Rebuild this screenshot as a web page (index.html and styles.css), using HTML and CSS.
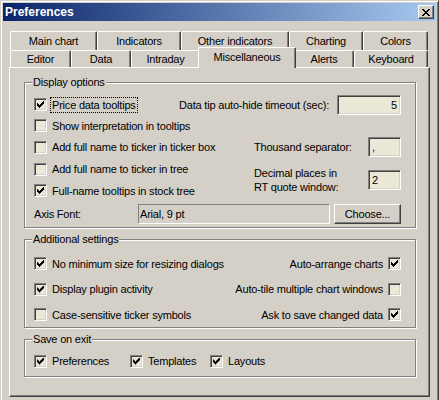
FILE: index.html
```html
<!DOCTYPE html>
<html lang="en">
<head>
    <meta charset="UTF-8">
    <meta name="viewport" content="width=device-width, initial-scale=1.0">
    <title>Preferences</title>
    <link rel="stylesheet" href="styles.css">
</head>
<body>
    <div class="window">
        <!-- Caption bar -->
        <div class="titlebar">
            <span class="title">Preferences</span>
            <button class="close-btn" type="button">
                <svg width="8" height="7" viewBox="0 0 8 7" shape-rendering="crispEdges">
                    <path d="M0 0h2v1H0zM6 0h2v1H6zM1 1h2v1H1zM5 1h2v1H5zM2 2h4v1H2zM3 3h2v1H3zM2 4h4v1H2zM1 5h2v1H1zM5 5h2v1H5zM0 6h2v1H0zM6 6h2v1H6z" fill="#000"/>
                </svg>
            </button>
        </div>

        <!-- Tab strip, two rows -->
        <div class="tabs">
            <div class="tab-row back">
                <div class="tab">Main chart</div>
                <div class="tab">Indicators</div>
                <div class="tab">Other indicators</div>
                <div class="tab">Charting</div>
                <div class="tab">Colors</div>
            </div>
            <div class="tab-row front">
                <div class="tab">Editor</div>
                <div class="tab">Data</div>
                <div class="tab">Intraday</div>
                <div class="tab active">Miscellaneous</div>
                <div class="tab">Alerts</div>
                <div class="tab">Keyboard</div>
            </div>
        </div>

        <div class="panel">
            <!-- Display options -->
            <div class="group display">
                <span class="group-title">Display options</span>
                <div class="display-grid">
                    <label class="check r1"><span class="box on"></span><span class="focus">Price data tooltips</span></label>
                    <label class="check r2"><span class="box"></span>Show interpretation in tooltips</label>
                    <label class="check r3"><span class="box"></span>Add full name to ticker in ticker box</label>
                    <label class="check r4"><span class="box"></span>Add full name to ticker in tree</label>
                    <label class="check r5"><span class="box on"></span>Full-name tooltips in stock tree</label>

                    <div class="field-row r1">
                        <span class="tip-label">Data tip auto-hide timeout (sec):</span>
                        <input class="input wide" type="text" value="5">
                    </div>
                    <div class="field-row r3">
                        <span class="side-label">Thousand separator:</span>
                        <input class="input narrow" type="text" value=",">
                    </div>
                    <div class="field-row r4-5">
                        <span class="side-label">Decimal places in<br>RT quote window:</span>
                        <input class="input narrow" type="text" value="2">
                    </div>

                    <div class="axis-row r6">
                        <span class="axis-label">Axis Font:</span>
                        <span class="font-field">Arial, 9 pt</span>
                        <button class="btn" type="button">Choose...</button>
                    </div>
                </div>
            </div>

            <!-- Additional settings -->
            <div class="group additional">
                <span class="group-title">Additional settings</span>
                <div class="opt-row">
                    <label class="check"><span class="box on"></span>No minimum size for resizing dialogs</label>
                    <label class="check">Auto-arrange charts<span class="box on"></span></label>
                </div>
                <div class="opt-row mid">
                    <label class="check"><span class="box on"></span>Display plugin activity</label>
                    <label class="check">Auto-tile multiple chart windows<span class="box"></span></label>
                </div>
                <div class="opt-row">
                    <label class="check"><span class="box"></span>Case-sensitive ticker symbols</label>
                    <label class="check">Ask to save changed data<span class="box on"></span></label>
                </div>
            </div>

            <!-- Save on exit -->
            <div class="group save">
                <span class="group-title">Save on exit</span>
                <div class="save-row">
                    <label class="check"><span class="box on"></span>Preferences</label>
                    <label class="check"><span class="box on"></span>Templates</label>
                    <label class="check"><span class="box on"></span>Layouts</label>
                </div>
            </div>
        </div>
    </div>
</body>
</html>
```

FILE: styles.css
```css
body {
    margin: 0;
    padding: 0;
    background-color: #d4d0c8;
    font-family: "Liberation Sans", Arial, sans-serif;
    font-size: 11px;
    letter-spacing: -0.2px;
    color: #000;
    overflow: hidden;
}
.window {
    width: 439px;
    height: 414px;
    box-sizing: border-box;
    padding: 2px;
    border-top: 1px solid #d4d0c8;
    border-left: 1px solid #d4d0c8;
    border-right: 1px solid #404040;
    border-bottom: 1px solid #404040;
    box-shadow: inset 1px 1px #fff, inset -1px -1px #808080;
}
.titlebar {
    height: 18px;
    display: flex;
    align-items: center;
    justify-content: space-between;
    padding: 0 2px;
    background: linear-gradient(to right, #0a246a, #a6caf0);
}
.title {
    color: #fff;
    font-weight: bold;
    font-size: 12px;
    letter-spacing: 0;
}
.close-btn {
    width: 16px;
    height: 14px;
    box-sizing: border-box;
    padding: 0;
    display: flex;
    align-items: center;
    justify-content: center;
    background-color: #d4d0c8;
    border-top: 1px solid #fff;
    border-left: 1px solid #fff;
    border-right: 1px solid #404040;
    border-bottom: 1px solid #404040;
    box-shadow: inset -1px -1px #808080;
}

/* tabs */
.tabs {
    margin: 10px 8px 0 7px;
}
.tab-row {
    display: grid;
}
.tab-row.back {
    grid-template-columns: 87px 84px 108px 74px 65px;
}
.tab-row.front {
    grid-template-columns: 61px 60px 69px 94px 60px 74px;
}
.tab {
    box-sizing: border-box;
    text-align: center;
    white-space: nowrap;
    background-color: #d4d0c8;
    border-top: 1px solid #fff;
    border-left: 1px solid #fff;
    border-right: 1px solid #404040;
    box-shadow: inset -1px 0 #808080;
    border-radius: 2px 2px 0 0;
}
.back .tab {
    height: 19px;
    line-height: 18px;
}
.front .tab {
    height: 17px;
    line-height: 16px;
}
.front .tab.active {
    position: relative;
    z-index: 1;
    height: 21px;
    line-height: 19px;
    margin: -3px -2px -1px;
}

/* tab page */
.panel {
    height: 330px;
    box-sizing: border-box;
    margin: 0 6px;
    padding: 14px 13px 0 14px;
    border-top: 1px solid #fff;
    border-left: 1px solid #fff;
    border-right: 1px solid #404040;
    border-bottom: 1px solid #404040;
    box-shadow: inset -1px -1px #808080;
}
.group {
    position: relative;
    border: 1px solid #808080;
    box-shadow: inset 1px 1px #fff, 1px 1px #fff;
}
.group-title {
    position: absolute;
    top: -7px;
    left: 7px;
    padding: 0 1px;
    line-height: 13px;
    background-color: #d4d0c8;
}
.display {
    padding: 11px 14px 0 9px;
}
.additional {
    margin-top: 11px;
    padding: 11px 14px 0 9px;
}
.save {
    margin-top: 11px;
    padding: 12px 14px 6px 9px;
}

/* checkboxes */
.check {
    display: flex;
    align-items: center;
    gap: 5px;
    white-space: nowrap;
}
.box {
    position: relative;
    flex: none;
    width: 13px;
    height: 13px;
    box-sizing: border-box;
    background-color: #ebe8d8;
    border-top: 1px solid #808080;
    border-left: 1px solid #808080;
    border-right: 1px solid #fff;
    border-bottom: 1px solid #fff;
    box-shadow: inset 1px 1px #404040, inset -1px -1px #d4d0c8;
}
.box.on::after {
    content: "";
    position: absolute;
    left: 2px;
    top: 2px;
    width: 7px;
    height: 7px;
    background-color: #000;
    clip-path: polygon(0 2px, 1px 2px, 1px 3px, 2px 3px, 2px 4px, 3px 4px, 3px 3px, 4px 3px, 4px 2px, 5px 2px, 5px 1px, 6px 1px, 6px 0, 7px 0, 7px 3px, 6px 3px, 6px 4px, 5px 4px, 5px 5px, 4px 5px, 4px 6px, 3px 6px, 3px 7px, 2px 7px, 2px 6px, 1px 6px, 1px 5px, 0 5px);
}
.focus {
    outline: 1px dotted #000;
    padding: 0 1px;
    margin-left: -1px;
    line-height: 14px;
}

/* display options layout: one column, right-hand fields share rows with the checkboxes */
.display-grid {
    display: grid;
    grid-template-columns: minmax(0, 1fr);
    grid-template-rows: 21px 21px 22px 22px 21px 26px;
}
.display-grid > .check {
    grid-column: 1;
    justify-self: start;
}
.r1 { grid-row: 1; }
.r2 { grid-row: 2; }
.r3 { grid-row: 3; }
.r4 { grid-row: 4; }
.r5 { grid-row: 5; }
.r4-5 { grid-row: 4 / span 2; }
.r6 { grid-row: 6; }
.field-row {
    grid-column: 1;
    justify-self: end;
    display: flex;
    align-items: center;
}
.tip-label {
    white-space: nowrap;
}
.side-label {
    width: 114px;
    line-height: 14px;
    white-space: nowrap;
}
.input {
    height: 20px;
    box-sizing: border-box;
    margin: 0;
    padding: 0 3px;
    font: inherit;
    letter-spacing: inherit;
    color: #000;
    background-color: #ebe8d8;
    border-top: 1px solid #808080;
    border-left: 1px solid #808080;
    border-right: 1px solid #fff;
    border-bottom: 1px solid #fff;
    box-shadow: inset 1px 1px #404040, inset -1px -1px #d4d0c8;
    outline: none;
}
.wide {
    flex: none;
    width: 64px;
    margin-left: 8px;
    text-align: right;
}
.narrow {
    flex: none;
    width: 33px;
}
.axis-row {
    grid-column: 1;
    display: flex;
    align-items: center;
}
.axis-label {
    width: 104px;
}
.font-field {
    flex: 1;
    height: 20px;
    box-sizing: border-box;
    padding-left: 1px;
    line-height: 18px;
    border-top: 1px solid #808080;
    border-left: 1px solid #808080;
    border-right: 1px solid #fff;
    border-bottom: 1px solid #fff;
}
.btn {
    width: 67px;
    height: 20px;
    margin-left: 4px;
    padding: 0;
    font: inherit;
    letter-spacing: inherit;
    color: #000;
    background-color: #d4d0c8;
    border-top: 1px solid #fff;
    border-left: 1px solid #fff;
    border-right: 1px solid #404040;
    border-bottom: 1px solid #404040;
    box-shadow: inset -1px -1px #808080;
}

/* additional settings + save on exit rows */
.opt-row {
    height: 25px;
    display: flex;
    align-items: center;
    justify-content: space-between;
}
.opt-row.mid {
    height: 26px;
}
.save-row {
    height: 18px;
    display: flex;
    align-items: center;
}
.save-row .check:nth-child(1) {
    width: 96px;
}
.save-row .check:nth-child(2) {
    width: 80px;
}
```
